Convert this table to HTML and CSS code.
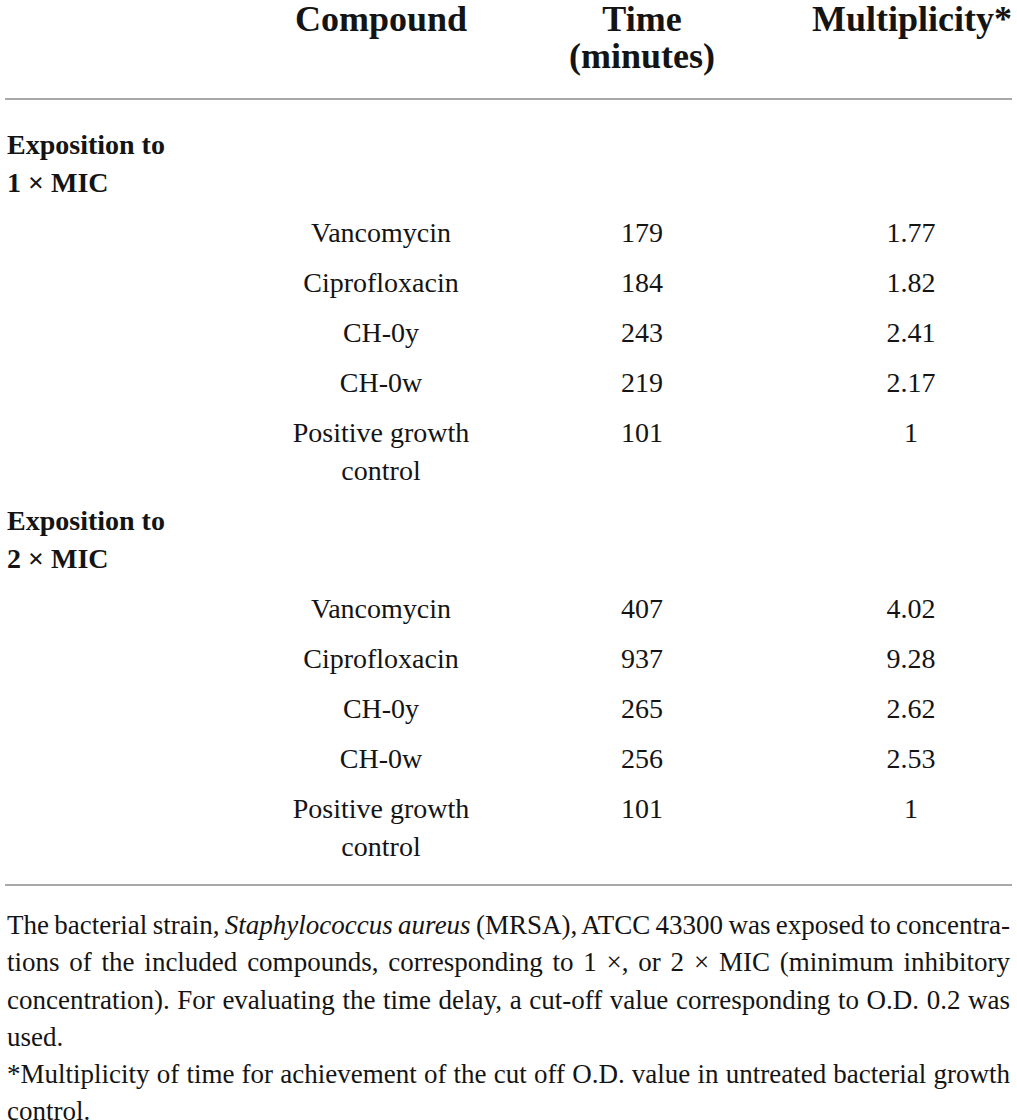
FILE: index.html
```html
<!DOCTYPE html>
<html lang="en">
<head>
<meta charset="utf-8">
<title>Time delay table</title>
<link rel="stylesheet" href="styles.css">
</head>
<body>
<div class="page">
  <table class="data">
    <colgroup>
      <col class="c-label">
      <col class="c-compound">
      <col class="c-time">
      <col class="c-mult">
    </colgroup>
    <thead>
      <tr>
        <th class="label"></th>
        <th>Compound</th>
        <th>Time<br>(minutes)</th>
        <th>Multiplicity*</th>
      </tr>
    </thead>
    <tbody>
      <tr class="section first">
        <td class="label">Exposition to<br>1 × MIC</td><td></td><td></td><td></td>
      </tr>
      <tr><td></td><td>Vancomycin</td><td>179</td><td>1.77</td></tr>
      <tr><td></td><td>Ciprofloxacin</td><td>184</td><td>1.82</td></tr>
      <tr><td></td><td>CH-0y</td><td>243</td><td>2.41</td></tr>
      <tr><td></td><td>CH-0w</td><td>219</td><td>2.17</td></tr>
      <tr><td></td><td>Positive growth control</td><td>101</td><td>1</td></tr>
      <tr class="section">
        <td class="label">Exposition to<br>2 × MIC</td><td></td><td></td><td></td>
      </tr>
      <tr><td></td><td>Vancomycin</td><td>407</td><td>4.02</td></tr>
      <tr><td></td><td>Ciprofloxacin</td><td>937</td><td>9.28</td></tr>
      <tr><td></td><td>CH-0y</td><td>265</td><td>2.62</td></tr>
      <tr><td></td><td>CH-0w</td><td>256</td><td>2.53</td></tr>
      <tr class="last"><td></td><td>Positive growth control</td><td>101</td><td>1</td></tr>
    </tbody>
  </table>
  <div class="notes">
    <p class="note">
      <span class="ln">The bacterial strain, <i>Staphylococcus aureus</i> (MRSA), ATCC 43300 was exposed to concentra-</span>
      <span class="ln">tions of the included compounds, corresponding to 1 ×, or 2 × MIC (minimum inhibitory</span>
      <span class="ln">concentration). For evaluating the time delay, a cut-off value corresponding to O.D. 0.2 was</span>
      <span class="ln end">used.</span>
    </p>
    <p class="note">
      <span class="ln">*Multiplicity of time for achievement of the cut off O.D. value in untreated bacterial growth</span>
      <span class="ln end">control.</span>
    </p>
  </div>
</div>
</body>
</html>
```

FILE: styles.css
```css
html, body {
  margin: 0;
  padding: 0;
  background: #ffffff;
}

body {
  font-family: "Liberation Serif", "Times New Roman", serif;
  color: #141414;
}

.page {
  padding: 0 5px;
  width: 1007px;
}

.data {
  width: 1007px;
  border-collapse: separate;
  border-spacing: 0;
  table-layout: fixed;
}

.c-label { width: 283px; }
.c-compound { width: 186px; }
.c-time { width: 336px; }
.c-mult { width: 202px; }

.data th {
  font-weight: bold;
  font-size: 36px;
  line-height: 37px;
  text-align: center;
  vertical-align: top;
  padding: 1px 2px 23px;
  border-bottom: 2px solid #a8a8a8;
}

.data td {
  font-size: 28px;
  line-height: 38px;
  text-align: center;
  vertical-align: top;
  padding: 6px 2px;
}

.data td.label {
  text-align: left;
  font-weight: bold;
}

.data tr.first td {
  padding-top: 26px;
}

.data tr.last td {
  padding-bottom: 18px;
  border-bottom: 2px solid #a8a8a8;
}

.notes {
  padding: 21px 2px 0;
}

.note {
  margin: 0;
  font-size: 27px;
  line-height: 37.3px;
}

.ln {
  display: block;
  text-align: justify;
  text-align-last: justify;
  white-space: nowrap;
  word-spacing: -2.5px;
}

.ln.end {
  text-align: left;
  text-align-last: left;
  word-spacing: normal;
}
```
